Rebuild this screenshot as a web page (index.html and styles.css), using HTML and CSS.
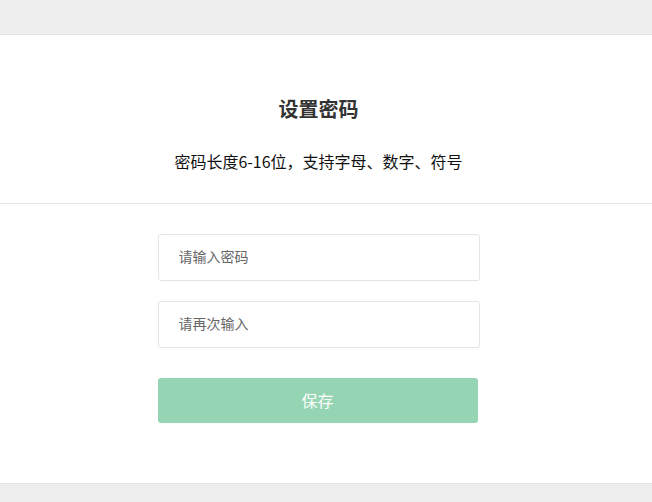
FILE: index.html
```html
<!DOCTYPE html>
<html lang="zh-CN">
<head>
    <meta charset="UTF-8">
    <meta name="viewport" content="width=device-width, initial-scale=1.0">
    <title>设置密码</title>
    <link rel="stylesheet" href="styles.css">
</head>
<body>
    <div class="topbar"></div>
    <div class="head">
        <h1>设置密码</h1>
        <p class="tip">密码长度6-16位，支持字母、数字、符号</p>
    </div>
    <div class="page">
        <div class="form">
            <input type="password" class="field" placeholder="请输入密码">
            <input type="password" class="field" placeholder="请再次输入">
            <button class="save">保存</button>
        </div>
    </div>
    <div class="bottombar"></div>
</body>
</html>
```

FILE: styles.css
```css
body {
    margin: 0;
    font-family: "Noto Sans CJK SC", "Noto Sans", sans-serif;
    background: #fff;
}
.topbar {
    height: 34px;
    background: #eeeeee;
    border-bottom: 1px solid #e2e2e2;
}
.head {
    text-align: center;
    border-bottom: 1px solid #e6e6e6;
    padding: 60px 15px 30px 0;
}
.head h1 {
    margin: 0;
    font-size: 20px;
    line-height: 28px;
    font-weight: bold;
    color: #333;
}
.tip {
    margin: 26px 0 0;
    font-size: 16px;
    line-height: 24px;
    color: #111;
}
.page {
    width: 637px;
}
.form {
    width: 322px;
    margin: 30px auto 0;
    display: flex;
    flex-direction: column;
}
.field {
    height: 47px;
    box-sizing: border-box;
    border: 1px solid #e4e4e4;
    border-radius: 3px;
    padding: 0 20px 3px;
    font-family: inherit;
    font-size: 14px;
    margin-bottom: 20px;
    outline: none;
}
.field::placeholder {
    color: #666;
}
.save {
    margin-top: 10px;
    width: 320px;
    height: 45px;
    padding-bottom: 3px;
    border: none;
    border-radius: 3px;
    background: #95d5b3;
    color: #fff;
    font-family: inherit;
    font-size: 16px;
}
.bottombar {
    margin-top: 60px;
    height: 20px;
    background: #eeeeee;
    border-top: 1px solid #e2e2e2;
}
```
